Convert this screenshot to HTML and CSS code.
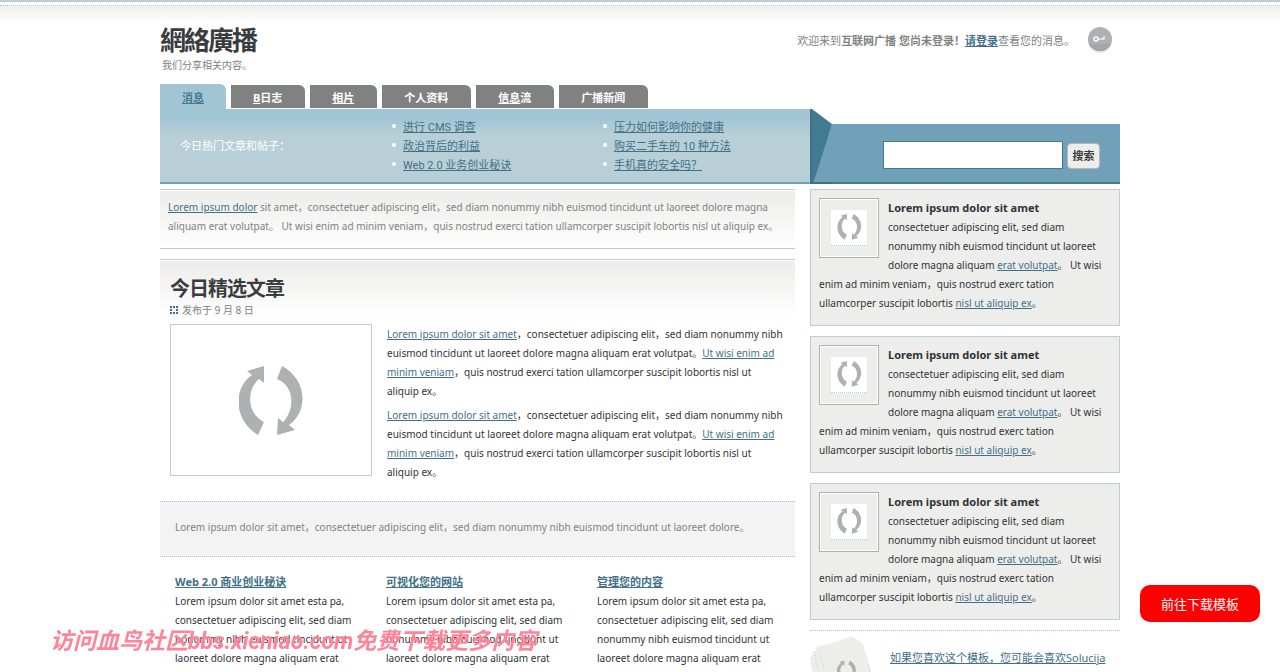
FILE: index.html
```html
<!DOCTYPE html>
<html lang="zh-CN">
<head>
<meta charset="utf-8">
<title>網絡廣播</title>
<link rel="stylesheet" href="styles.css">
</head>
<body>
<svg class="defs" aria-hidden="true">
  <symbol id="arrows" viewBox="0 0 64 70">
    <path d="M8 5 L25 0 V17 L20 13 C7 24 8 48 25 56 L19 69 C-6 54 -6 22 13 9 Z"/>
    <path d="M43 0 C69 14 69 46 50 59 L56 64 L38 69 L39 52 L44 56 C56 44 56 20 38 13 Z"/>
  </symbol>
</svg>
<div class="page">
  <header class="header">
    <div>
      <h1 class="logo">網絡廣播</h1>
      <p class="slogan">我们分享相关内容。</p>
    </div>
    <div class="welcome">
      <p>欢迎来到<b>互联网广播</b> <b>您尚未登录！</b><a href="#"><b>请登录</b></a>查看您的消息。</p>
      <svg class="key" viewBox="0 0 26 28" aria-hidden="true">
        <circle cx="13" cy="15" r="12" fill="#e4e8ea"/>
        <circle cx="13" cy="13" r="12" fill="#aeb0b2"/>
        <path d="M2 18a12 12 0 0 0 22 0z" fill="#a2a7aa"/>
        <circle cx="9" cy="13" r="2" fill="none" stroke="#fff" stroke-width="1.4"/>
        <path d="M11 13h6v-2M15 13v-1M17 13v-3" fill="none" stroke="#fff" stroke-width="1.2"/>
      </svg>
    </div>
  </header>

  <nav class="tabs">
    <a class="tab active" href="#"><u>消息</u></a>
    <a class="tab" href="#"><u>B</u>日志</a>
    <a class="tab" href="#"><u>相片</u></a>
    <a class="tab" href="#">个人资料</a>
    <a class="tab" href="#"><u>信息</u>流</a>
    <a class="tab" href="#">广播新闻</a>
  </nav>

  <section class="band">
    <div class="hot">
      <p class="hot-title">今日热门文章和帖子：</p>
      <ul>
        <li><a href="#">进行 CMS 调查</a></li>
        <li><a href="#">政治背后的利益</a></li>
        <li><a href="#">Web 2.0 业务创业秘诀</a></li>
      </ul>
      <ul>
        <li><a href="#">压力如何影响你的健康</a></li>
        <li><a href="#">购买二手车的 10 种方法</a></li>
        <li><a href="#">手机真的安全吗？</a></li>
      </ul>
    </div>
    <form class="search">
      <svg class="fold" viewBox="0 0 22 75" preserveAspectRatio="none" aria-hidden="true">
        <path d="M22 15V75H0z" fill="#70a1b9"/>
        <path d="M0 0H2L22 15L3 75H0z" fill="#427a91"/>
        <path d="M0 0H2V75H0zM2 73H22V75H2z" fill="#427088"/>
      </svg>
      <div class="search-box">
        <input type="text" aria-label="搜索">
        <button type="submit">搜索</button>
      </div>
    </form>
  </section>

  <div class="columns">
    <main class="main">
      <p class="intro"><a href="#">Lorem ipsum dolor</a> sit amet，consectetuer adipiscing elit，sed diam nonummy nibh euismod tincidunt ut laoreet dolore magna aliquam erat volutpat。 Ut wisi enim ad minim veniam，quis nostrud exerci tation ullamcorper suscipit lobortis nisl ut aliquip ex。</p>
      <article class="feature">
        <h2>今日精选文章</h2>
        <p class="date"><i></i>发布于 9 月 8 日</p>
        <div class="feature-body">
          <div class="picture"><svg aria-hidden="true"><use href="#arrows"/></svg></div>
          <div class="feature-text">
            <p><a href="#">Lorem ipsum dolor sit amet</a>，consectetuer adipiscing elit，sed diam nonummy nibh euismod tincidunt ut laoreet dolore magna aliquam erat volutpat。<a href="#">Ut wisi enim ad minim veniam</a>，quis nostrud exerci tation ullamcorper suscipit lobortis nisl ut aliquip ex。</p>
            <p><a href="#">Lorem ipsum dolor sit amet</a>，consectetuer adipiscing elit，sed diam nonummy nibh euismod tincidunt ut laoreet dolore magna aliquam erat volutpat。<a href="#">Ut wisi enim ad minim veniam</a>，quis nostrud exerci tation ullamcorper suscipit lobortis nisl ut aliquip ex。</p>
          </div>
        </div>
      </article>
      <p class="note">Lorem ipsum dolor sit amet，consectetuer adipiscing elit，sed diam nonummy nibh euismod tincidunt ut laoreet dolore。</p>
      <div class="trio">
        <section><h3><a href="#">Web 2.0 商业创业秘诀</a></h3><p>Lorem ipsum dolor sit amet esta pa, consectetuer adipiscing elit, sed diam nonummy nibh euismod tincidunt ut laoreet dolore magna aliquam erat</p></section>
        <section><h3><a href="#">可视化您的网站</a></h3><p>Lorem ipsum dolor sit amet esta pa, consectetuer adipiscing elit, sed diam nonummy nibh euismod tincidunt ut laoreet dolore magna aliquam erat</p></section>
        <section><h3><a href="#">管理您的内容</a></h3><p>Lorem ipsum dolor sit amet esta pa, consectetuer adipiscing elit, sed diam nonummy nibh euismod tincidunt ut laoreet dolore magna aliquam erat</p></section>
      </div>
    </main>

    <aside class="side">
      <section class="card">
        <div class="thumb"><span><svg aria-hidden="true"><use href="#arrows"/></svg></span></div>
        <h3>Lorem ipsum dolor sit amet</h3>
        <p>consectetuer adipiscing elit, sed diam nonummy nibh euismod tincidunt ut laoreet dolore magna aliquam <a href="#">erat volutpat</a>。 Ut wisi enim ad minim veniam，quis nostrud exerc tation ullamcorper suscipit lobortis <a href="#">nisl ut aliquip ex</a>。</p>
      </section>
      <section class="card">
        <div class="thumb"><span><svg aria-hidden="true"><use href="#arrows"/></svg></span></div>
        <h3>Lorem ipsum dolor sit amet</h3>
        <p>consectetuer adipiscing elit, sed diam nonummy nibh euismod tincidunt ut laoreet dolore magna aliquam <a href="#">erat volutpat</a>。 Ut wisi enim ad minim veniam，quis nostrud exerc tation ullamcorper suscipit lobortis <a href="#">nisl ut aliquip ex</a>。</p>
      </section>
      <section class="card">
        <div class="thumb"><span><svg aria-hidden="true"><use href="#arrows"/></svg></span></div>
        <h3>Lorem ipsum dolor sit amet</h3>
        <p>consectetuer adipiscing elit, sed diam nonummy nibh euismod tincidunt ut laoreet dolore magna aliquam <a href="#">erat volutpat</a>。 Ut wisi enim ad minim veniam，quis nostrud exerc tation ullamcorper suscipit lobortis <a href="#">nisl ut aliquip ex</a>。</p>
      </section>
      <section class="promo">
        <svg class="stack" viewBox="0 0 70 70" aria-hidden="true">
          <path d="M0 22 L8 10 L20 8 L42 0 L53 8 L63 42 L68 70 H8 Z" fill="#ededec"/>
          <path d="M4 16 L14 60 M9 14 L18 50 M58 28 L66 60" stroke="#b9cfd7" stroke-dasharray="1 2" fill="none"/>
          <svg x="27" y="21" width="19" height="28" viewBox="0 0 64 70"><use href="#arrows"/></svg>
        </svg>
        <p><a href="#">如果您喜欢这个模板，您可能会喜欢Solucija</a></p>
      </section>
    </aside>
  </div>
</div>
<p class="watermark">访问血鸟社区bbs.xieniao.com免费下载更多内容</p>
<a class="download" href="#">前往下载模板</a>
</body>
</html>
```

FILE: styles.css
```css
* { box-sizing: border-box; }
body, h1, h2, h3, p, ul { margin: 0; padding: 0; }
body {
  font: 11px/19px "Noto Sans", "Noto Sans CJK SC", sans-serif;
  color: #303436;
  background: #fff linear-gradient(#ececeb, #fff) 0 3px / 100% 21px no-repeat;
  border-top: 2px solid #b9cfd7;
}
body::before {
  content: "";
  display: block;
  height: 3px;
  background: #fff;
  border-bottom: 1px dotted #a2c5d5;
}
a { color: #427088; }
.defs { position: absolute; width: 0; height: 0; }
svg { fill: #aeb0b1; }
.page { max-width: 960px; margin: 0 auto; }

.header { display: flex; justify-content: space-between; padding-top: 18px; }
.logo { font: bold 26px/34px "Liberation Sans", "Noto Sans CJK TC", sans-serif; letter-spacing: -2px; color: #3a3d3f; }
.slogan { padding-left: 2px; font-size: 10px; line-height: 14px; color: #808281; }
.welcome { display: flex; gap: 12px; padding: 2px 7px 0 0; color: #808281; }
.welcome p { padding-top: 5px; }
.key { width: 26px; height: 28px; }

.tabs { display: flex; align-items: flex-end; gap: 5px; margin-top: 12px; }
.tab {
  height: 23px;
  margin-bottom: 1px;
  padding: 0 23px 0 22px;
  border-radius: 0 6px 0 0;
  background: #808281;
  color: #fff;
  font-weight: bold;
  line-height: 25px;
  text-decoration: none;
}
.tab.active { height: 25px; margin: 0; padding-right: 22px; background: #a2c5d5; color: #427a91; line-height: 27px; }

.band { display: flex; height: 75px; }
.hot {
  flex: 1;
  display: grid;
  grid-template-columns: 1fr 211px 207px;
  align-items: start;
  padding: 9px 0 0 20px;
  background: linear-gradient(#a2c5d5 10px, #b9cfd7 26px);
  border-bottom: 2px solid #70a1b9;
}
.hot-title { padding-top: 18px; color: #fff; }
.hot ul { list-style: none; font-family: Roboto, "Noto Sans CJK SC", sans-serif; }
.hot li { display: flex; align-items: center; gap: 7px; }
.hot li::before { content: ""; width: 4px; height: 4px; margin-bottom: 3px; border-radius: 50%; background: #fff; }
.search { display: flex; width: 310px; }
.fold { width: 22px; height: 75px; }
.search-box {
  flex: 1;
  display: flex;
  align-items: center;
  justify-content: flex-end;
  gap: 4px;
  margin-top: 15px;
  padding: 3px 20px 0 0;
  background: #70a1b9;
  border-bottom: 2px solid #427a91;
}
.search input { width: 180px; height: 28px; border: 1px solid #427a91; background: #fff; margin: 0; }
.search button {
  width: 33px;
  height: 26px;
  margin-top: 3px;
  padding: 0;
  border: 1px solid #b9b5b3;
  border-radius: 4px;
  background: #ededec;
  color: #3a3d3f;
  font: bold 11px/20px "Noto Sans", "Noto Sans CJK SC", sans-serif;
}

.columns { display: grid; grid-template-columns: minmax(0, 1fr) 310px; gap: 15px; padding-top: 5px; }
.intro, .feature-text, .note, .trio p, .card p { font-size: 10px; }
.intro {
  min-height: 60px;
  padding: 8px;
  color: #808281;
  background: linear-gradient(#ececeb, #fff) 0 1px no-repeat;
  border: solid #b9cfd7;
  border-width: 1px 0;
}
.feature {
  margin-top: 10px;
  padding: 16px 10px 0;
  border-top: 1px solid #b9cfd7;
  background: linear-gradient(#ececeb, #fff) 0 1px / 100% 56px no-repeat;
}
.feature h2 { font: bold 20px/26px "Liberation Sans", "Noto Sans CJK SC", sans-serif; letter-spacing: -1px; color: #3a3d3f; }
.date { display: flex; align-items: center; gap: 4px; font-size: 10px; line-height: 16px; color: #808281; }
.date i { width: 8px; height: 8px; border: 2px dotted #427088; }
.feature-body { display: flex; gap: 15px; margin-top: 6px; }
.picture { flex: none; width: 202px; height: 152px; padding: 41px 68px; border: 1px solid #b9cfd7; background: #fff; }
.picture svg { display: block; width: 64px; height: 70px; }
.feature-text { padding-top: 1px; }
.feature-text p { margin-bottom: 5px; }
.note {
  margin-top: 14px;
  padding: 16px 15px 19px;
  background: #f3f3f3;
  border: dotted #a2c5d5;
  border-width: 1px 0;
  color: #808281;
}
.trio { display: grid; grid-template-columns: repeat(3, 181px); gap: 30px; padding: 15px 15px 0; }
h3 { font-size: 11px; line-height: 20px; }

.card { min-height: 137px; margin-bottom: 10px; padding: 8px; border: 1px solid #b9cfd7; background: #ededec; }
.thumb { float: left; width: 60px; height: 60px; margin: 0 9px 8px 0; padding: 11px; border: 1px solid #aeb0b1; box-shadow: inset 0 0 0 1px #fff; }
.thumb span { display: flex; justify-content: center; height: 36px; padding-top: 4px; background: #fff; border-bottom: 1px dotted #b9cfd7; }
.thumb svg { width: 25px; height: 26px; }
.promo { display: flex; gap: 10px; border-top: 1px dotted #a2c5d5; padding-top: 5px; }
.stack { flex: none; width: 70px; height: 70px; }
.promo p { padding-top: 12px; white-space: nowrap; }

.watermark {
  position: fixed;
  left: 50px;
  bottom: 16px;
  color: #ff8498;
  font: italic bold 23px/28px Roboto, "Noto Sans CJK SC", sans-serif;
}
.download {
  position: fixed;
  right: 20px;
  bottom: 50px;
  width: 120px;
  border-radius: 10px;
  background: #f00;
  color: #fff;
  font: 13px/37px "Noto Sans CJK SC", sans-serif;
  text-align: center;
  text-decoration: none;
}
```
